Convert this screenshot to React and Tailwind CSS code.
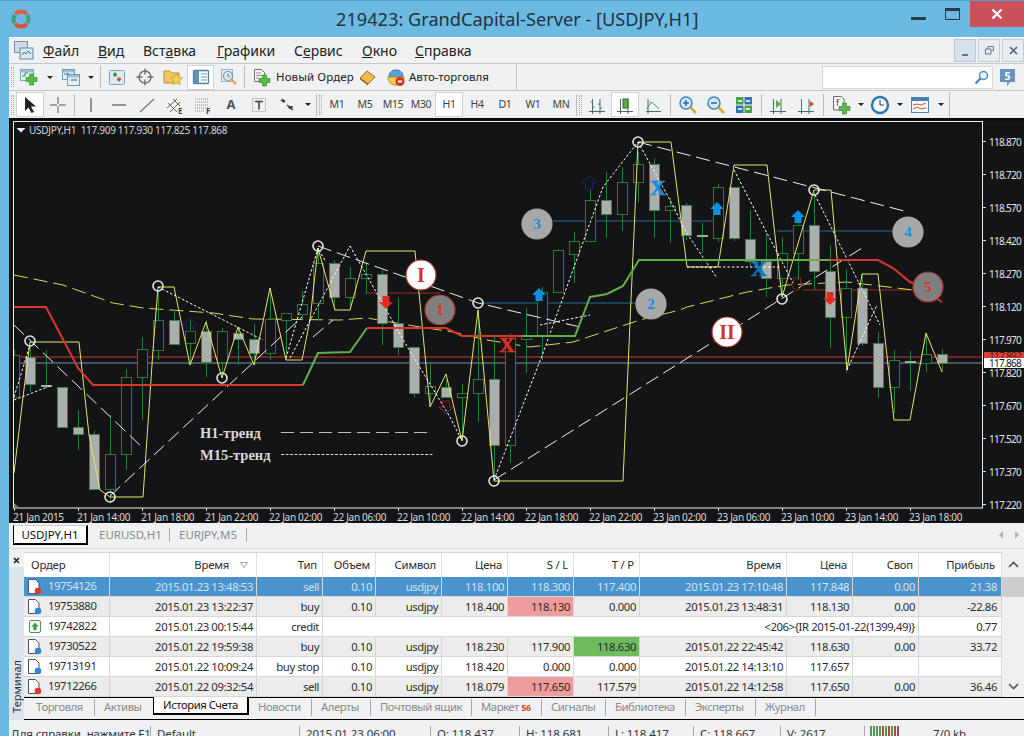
import React from 'react';

const CANDLES = [
  [355, 397, 350, 398, 'h'], [357, 384, 347, 392, 'g'], [385, 387, 350, 388, 'd'], [387, 427, 387, 427, 'g'],
  [427, 434, 410, 450, 'g'], [434, 489, 431, 489, 'g'], [454, 489, 415, 503, 'h'], [377, 454, 369, 470, 'h'],
  [349, 377, 337, 420, 'h'], [320, 350, 290, 360, 'h'], [320, 344, 310, 344, 'g'], [331, 343, 320, 365, 'h'],
  [331, 362, 320, 377, 'g'], [331, 362, 328, 377, 'h'], [333, 339, 327, 365, 'g'], [339, 353, 324, 365, 'g'],
  [319, 353, 288, 360, 'h'], [313, 320, 313, 360, 'h'], [304, 314, 291, 320, 'h'], [263, 303, 248, 320, 'h'],
  [263, 297, 260, 310, 'g'], [278, 297, 267, 310, 'h'], [274, 278, 263, 293, 'h'], [274, 323, 270, 345, 'g'],
  [323, 347, 298, 355, 'g'], [347, 393, 347, 397, 'g'], [386, 393, 362, 407, 'h'], [387, 397, 380, 397, 'g'],
  [393, 397, 384, 440, 'h'], [379, 393, 310, 422, 'h'], [379, 445, 337, 478, 'g'], [338, 445, 333, 463, 'h'],
  [336, 339, 308, 373, 'h'], [292, 336, 287, 360, 'h'], [250, 292, 249, 293, 'h'], [241, 254, 232, 283, 'h'],
  [200, 241, 190, 242, 'h'], [200, 214, 172, 238, 'g'], [182, 214, 167, 231, 'h'], [164, 182, 152, 202, 'h'],
  [164, 210, 158, 238, 'g'], [206, 210, 198, 243, 'h'], [205, 235, 203, 240, 'g'], [235, 237, 223, 253, 'd'],
  [187, 238, 184, 242, 'h'], [187, 238, 187, 241, 'g'], [239, 261, 210, 267, 'g'], [261, 278, 233, 297, 'g'],
  [253, 278, 237, 293, 'h'], [225, 253, 217, 280, 'h'], [225, 271, 192, 290, 'g'], [271, 317, 245, 348, 'g'],
  [288, 317, 269, 373, 'h'], [288, 343, 273, 346, 'g'], [343, 387, 332, 398, 'g'], [360, 387, 350, 413, 'h'],
  [361, 363, 351, 391, 'd'], [354, 363, 333, 372, 'h'], [354, 363, 349, 372, 'g'],
];

const YELLOW = '14,473 23,397 30,342 79,342 89,435 100,490 110,497 143,497 153,350 158,287 174,287 190,365 206,322 222,378 238,327 254,365 270,288 286,360 302,360 310,320 318,248 335,310 350,310 366,251 415,251 430,407 446,374 462,441 478,310 494,481 623,481 638,142 671,142 687,267 718,267 734,165 767,165 782,297 814,190 831,190 847,370 862,274 878,274 894,420 910,420 926,333 942,372';
const MA = '14,275 63,285 113,303 143,308 213,313 253,319 340,320 367,318 420,327 453,332 487,340 530,347 573,342 640,320 680,310 687,307 747,292 787,285 847,282 913,290';
const RINGS = [[30, 341], [110, 497], [158, 286], [222, 378], [318, 246], [462, 441], [478, 303], [494, 481], [638, 142], [782, 299], [814, 190]];
const H1_TREND = ['14,325 143,448', '110,496 302,317', '313,337 333,320', '318,246 478,303 580,327', '494,480 862,248', '638,142 908,212'];
const M15_TREND = [
  '14,400 50,386', '14,397 30,345', '158,287 263,340', '286,358 318,248 326,262', '290,358 350,246', '350,246 392,320 405,343 450,417 462,441',
  '494,480 543,353 603,187 638,142', '638,142 670,200 686,232 717,278', '687,267 780,267', '734,170 793,283', '815,195 880,325',
  '847,370 877,305', '540,325 590,315',
];
const PRICES = ['118.870', '118.720', '118.570', '118.420', '118.270', '118.120', '117.970', '117.820', '117.670', '117.520', '117.370', '117.220'];
const TIMES = ['21 Jan 2015', '21 Jan 14:00', '21 Jan 18:00', '21 Jan 22:00', '22 Jan 02:00', '22 Jan 06:00', '22 Jan 10:00', '22 Jan 14:00', '22 Jan 18:00', '22 Jan 22:00', '23 Jan 02:00', '23 Jan 06:00', '23 Jan 10:00', '23 Jan 14:00', '23 Jan 18:00'];

const ROWS = [
  { id: '19754126', t1: '2015.01.23 13:48:53', type: 'sell', vol: '0.10', sym: 'usdjpy', price: '118.100', sl: '118.300', tp: '117.400', t2: '2015.01.23 17:10:48', p2: '117.848', swap: '0.00', profit: '21.38', ball: '#d8392b', selected: true },
  { id: '19753880', t1: '2015.01.23 13:22:37', type: 'buy', vol: '0.10', sym: 'usdjpy', price: '118.400', sl: '118.130', tp: '0.000', t2: '2015.01.23 13:48:31', p2: '118.130', swap: '0.00', profit: '-22.86', ball: '#2f86c9', slHit: true, alt: true },
  { id: '19742822', t1: '2015.01.23 00:15:44', type: 'credit', note: '<206>{IR 2015-01-22(1399,49)}', profit: '0.77', credit: true },
  { id: '19730522', t1: '2015.01.22 19:59:38', type: 'buy', vol: '0.10', sym: 'usdjpy', price: '118.230', sl: '117.900', tp: '118.630', t2: '2015.01.22 22:45:42', p2: '118.630', swap: '0.00', profit: '33.72', ball: '#2f86c9', tpHit: true, alt: true },
  { id: '19713191', t1: '2015.01.22 10:09:24', type: 'buy stop', vol: '0.10', sym: 'usdjpy', price: '118.420', sl: '0.000', tp: '0.000', t2: '2015.01.22 14:13:10', p2: '117.657', swap: '', profit: '', ball: '#2f86c9' },
  { id: '19712266', t1: '2015.01.22 09:32:54', type: 'sell', vol: '0.10', sym: 'usdjpy', price: '118.079', sl: '117.650', tp: '117.579', t2: '2015.01.22 14:12:58', p2: '117.650', swap: '0.00', profit: '36.46', ball: '#d8392b', slHit: true, alt: true },
];

const COLS = 'grid grid-cols-[86px_147px_66px_53px_66px_66px_66px_66px_147px_66px_66px_83px]';

const I = ({ children, w = 20, h = 20 }) => (
  <svg width={w} height={h} viewBox={`0 0 ${w} ${h}`} fill="none">{children}</svg>
);

const Plus = ({ x = 9, y = 9 }) => (
  <path d={`M${x + 3.5} ${y}h4v3.500h3.500v4h-3.500v3.500h-4v-3.500h-3.500v-4h3.500z`} fill="#5cb848" stroke="#3b8a2e" strokeWidth=".7" />
);

const Win = ({ x, y, w = 12, h = 11, c = '#7ea6c6' }) => (
  <g>
    <rect x={x + 0.5} y={y + 0.5} width={w} height={h} fill="#e6f0f7" stroke={c} />
    <rect x={x + 1} y={y + 1} width={w - 1} height="2.5" fill="#9cc0da" />
  </g>
);

const Caret = ({ w = 'w-[14px]' }) => (
  <div className={`h-[26px] flex items-center justify-center ${w}`}>
    <div className="w-0 h-0 border-x-[3px] border-x-transparent border-t-[3px] border-t-[#222]" />
  </div>
);

const Sep = ({ w = 'w-[5px]' }) => (
  <div className={`${w} h-[26px] flex items-center justify-center`}>
    <div className="w-px h-[22px] bg-[#b8bcc0]" />
  </div>
);

const Grip = ({ w = 'w-[6px]' }) => (
  <div className={`${w} h-[26px] flex items-center justify-center`}>
    <div className="w-[3px] h-[20px] border-x border-dotted border-[#aaa]" />
  </div>
);

const Btn = ({ children, active, w = 'w-7' }) => (
  <div className={`${w} h-[25px] flex items-center justify-center shrink-0 ${active ? 'bg-white border border-[#cfd3d6]' : ''}`}>
    {children}
  </div>
);

const AxisIcon = ({ children }) => (
  <I>
    <path d="M2 16.500h16M5.500 4v15M13 4v15" stroke="#4f6b6b" />
    {children}
  </I>
);

const Menu = () => (
  <div className="h-[27px] shrink-0 flex items-center border-b border-[#c4c8cb] border-t border-t-white text-[14px] text-[#222]">
    <div className="w-[34px] pl-[5px]">
      <I>
        <rect x=".5" y=".5" width="13" height="11" fill="#cfdce8" stroke="#7d8ea0" />
        <rect x="6" y="7" width="13" height="11" fill="#dbe8f2" stroke="#5f87a8" />
        <path d="M8 14l2-3 2 2 2-3 3 3" stroke="#3c6f96" />
      </I>
    </div>
    <span className="w-[55px]"><u>Ф</u>айл</span>
    <span className="w-[45px]"><u>В</u>ид</span>
    <span className="w-[74px]">Вст<u>а</u>вка</span>
    <span className="w-[77px]"><u>Г</u>рафики</span>
    <span className="w-[68px]">С<u>е</u>рвис</span>
    <span className="w-[53px]"><u>О</u>кно</span>
    <span className="w-[60px]"><u>С</u>правка</span>
    <div className="ml-auto flex gap-[2px] h-[23px] items-stretch">
      <div className="w-[22px] bg-[#d5e2ec] border border-[#b7c6d2] flex items-end justify-center pb-[5px]"><div className="w-[6px] h-[2px] bg-[#6b7680]" /></div>
      <div className="w-[22px] bg-[#e8edf1] border border-[#c2cdd6] flex items-center justify-center">
        <svg width="9" height="9" viewBox="0 0 9 9" fill="none"><path d="M3 2.500V.5h5.500v4H6.500M.5 3h5.500v5H.5z" stroke="#6b7680" /></svg>
      </div>
      <div className="w-[22px] bg-[#e8edf1] border border-[#c2cdd6] flex items-center justify-center">
        <svg width="9" height="9" viewBox="0 0 9 9" fill="none"><path d="M1 1l7 7M8 1L1 8" stroke="#5c6670" strokeWidth="1.7" /></svg>
      </div>
    </div>
  </div>
);

const ToolbarOne = () => (
  <div className="h-[27px] shrink-0 flex items-center border-b border-[#c4c8cb]">
    <Grip w="w-[6px]" />
    <Btn w="w-[28px]"><I><Win x={1} y={2} w={13} h={11} /><path d="M3 9h3V6h3" stroke="#3b8a2e" /><Plus x={7} y={7} /></I></Btn>
    <Caret />
    <Btn w="w-[27px]"><I><Win x={1} y={2} w={12} h={10} c="#6f9abb" /><Win x={6} y={7} w={12} h={11} c="#6f9abb" /><path d="M3 7h5M10 13h6" stroke="#3a5f7d" /></I></Btn>
    <Caret />
    <Sep w="w-[5px]" />
    <Btn w="w-7"><I><rect x="2.500" y="3.500" width="15" height="14" rx="1" fill="#dfeaf2" stroke="#7fa5c2" /><path d="M8 5l2.500 3h-5zM6.500 8h3v1.500h-3z" fill="#2f9a3c" /><path d="M12 15l-2.500-3h5zM10.500 10.500h3V12h-3z" fill="#d8452f" /></I></Btn>
    <Btn w="w-7"><I><circle cx="10" cy="10" r="6" stroke="#6c6f72" strokeWidth="1.400" /><path d="M10 1.500v6M10 12.500v6M1.500 10h6M12.500 10h6" stroke="#6c6f72" strokeWidth="1.400" /></I></Btn>
    <Btn w="w-7"><I><path d="M1 4h6l2 2h7v10H1z" fill="#efc760" stroke="#b99136" /><path d="M13.500 6.500l1.900 3.700 4.100.6-3 2.800.8 4.100-3.800-2-3.800 2 .8-4.100-3-2.800 4.100-.6z" fill="#f6d24c" stroke="#bf9a2c" strokeWidth=".7" /></I></Btn>
    <Btn active w="w-[27px]"><I><rect x="2.500" y="3.500" width="15" height="13" rx="1" fill="#f4f8fb" stroke="#4f82a8" strokeWidth="1.300" /><rect x="3" y="4" width="5" height="12" fill="#5d93bb" /><path d="M10 7h6M10 10h6M10 13h6" stroke="#7fa0ba" /></I></Btn>
    <Btn w="w-[29px]"><I><rect x="2.500" y="2.500" width="11" height="12" fill="#e1e9f0" stroke="#9fb3c4" /><circle cx="9" cy="9" r="4.500" fill="#dce8f1" stroke="#7995ad" strokeWidth="1.200" /><path d="M9 6.500V9l2 1" stroke="#5f7f99" /><path d="M12.500 12.500L17 17" stroke="#d9a63b" strokeWidth="2.200" /></I></Btn>
    <Sep w="w-[3px]" />
    <Btn w="w-[30px]"><I><path d="M3.500 2.500h7l3 3v9h-10z" fill="#f7f7f4" stroke="#6a6f72" /><path d="M5 6h5M5 8.500h6M5 11h3" stroke="#8b8f92" /><Plus x={8} y={8} /></I></Btn>
    <span className="w-[78px] text-[11.500px] text-[#222] shrink-0 tracking-[.1px]">Новый Ордер</span>
    <Btn w="w-[28px]"><I><path d="M2 11l7-7 8 6-7 7z" fill="#efb94d" stroke="#9a6d25" /><path d="M2 11l8 6v1.500L2 12.500z" fill="#8a5f20" /></I></Btn>
    <Btn w="w-[27px]"><I><path d="M3 10c0-5 3-7 7-7s7 2 7 7z" fill="#5aa3d8" stroke="#3678a8" /><path d="M2 10h16c0 5-3 8-8 8s-8-3-8-8z" fill="#f0cb58" stroke="#b3912f" /><circle cx="14" cy="14.500" r="4.500" fill="#d8341f" /><rect x="12" y="13.500" width="4" height="2" fill="#fff" /></I></Btn>
    <span className="w-[107px] text-[11.500px] text-[#222] shrink-0">Авто-торговля</span>
    <div className="w-px h-[26px] bg-[#c4c8cb]" />
    <div className="ml-[305px] w-[171px] h-[23px] bg-white border border-[#d4d7da] flex items-center justify-end pr-[3px] shrink-0">
      <svg width="15" height="15" viewBox="0 0 15 15" fill="none"><circle cx="9.500" cy="5.500" r="4" fill="#eaf3fa" stroke="#4d8fc4" strokeWidth="1.500" /><path d="M6.500 8.500L1.500 13.500" stroke="#3c7fb6" strokeWidth="2.200" /></svg>
    </div>
    <div className="ml-[6px]">
      <svg width="17" height="20" viewBox="0 0 17 20">
        <path d="M1 2h15v13h-5l-3 4v-4H1z" fill="#6a93bb" />
        <text x="8.500" y="12.500" textAnchor="middle" fontSize="10.500" fontWeight="700" fill="#fff">5</text>
      </svg>
    </div>
  </div>
);

const Tf = ({ children, active }) => (
  <Btn active={active} w="w-7"><span className="text-[10.500px] text-[#444] tracking-[-.3px]">{children}</span></Btn>
);

const ToolbarTwo = () => (
  <div className="h-[27px] shrink-0 flex items-center">
    <Grip w="w-[7px]" />
    <Btn active w="w-[28px]"><svg width="14" height="18" viewBox="0 0 14 18"><path d="M2 1v14l3.500-3.500 3 5.500 2.500-1-3-5.500H13z" fill="#222" /></svg></Btn>
    <Btn w="w-7"><I><path d="M10 2v7M10 11v7M2 10h7M11 10h7" stroke="#555" /></I></Btn>
    <Sep />
    <Btn><I><path d="M10 3v14" stroke="#555" strokeWidth="1.200" /></I></Btn>
    <Btn><I><path d="M3 10h14" stroke="#555" strokeWidth="1.200" /></I></Btn>
    <Btn><I><path d="M3 17L17 4" stroke="#777" strokeWidth="1.200" /></I></Btn>
    <Btn><I><path d="M2 13l10-9M5 17l10-10M3 8l9 9M8 4l7 7" stroke="#666" /><text x="13" y="19" fontSize="8" fontWeight="700" fill="#444">E</text></I></Btn>
    <Btn><I><path d="M2 4h13M2 7h13M2 10h13M2 13h13M2 16h10" stroke="#888" strokeDasharray="1 1" /><text x="13" y="19" fontSize="8" fontWeight="700" fill="#444">F</text></I></Btn>
    <Btn><span className="text-[13px] font-bold text-[#555]">A</span></Btn>
    <Btn><I><rect x="3.500" y="3.500" width="13" height="13" stroke="#999" strokeDasharray="1 1" /><path d="M6 6.500h8M10 6.500v8" stroke="#444" strokeWidth="1.600" /></I></Btn>
    <Btn><I><path d="M3 5h5l-1 3zM11 11h5l-1 3-3 0z" fill="#444" /><path d="M5 4l3 3M10 10l6 5" stroke="#444" strokeWidth="1.500" /></I></Btn>
    <Caret />
    <Sep w="w-[3px]" />
    <Grip w="w-[5px]" />
    <Tf>M1</Tf><Tf>M5</Tf><Tf>M15</Tf><Tf>M30</Tf><Tf active>H1</Tf><Tf>H4</Tf><Tf>D1</Tf><Tf>W1</Tf><Tf>MN</Tf>
    <Sep w="w-[2px]" />
    <Grip w="w-[6px]" />
    <Btn><AxisIcon><path d="M3.500 7h2M5.500 12h2M11 9h2M13 13h2" stroke="#4f6b6b" /></AxisIcon></Btn>
    <Btn active><AxisIcon><rect x="8" y="4" width="5" height="9" fill="#5dac4a" stroke="#2d6d2c" /></AxisIcon></Btn>
    <Btn><I><path d="M3 16.500h15M5 4v15" stroke="#4f6b6b" /><path d="M4 14l4-7 4 3 4 4" stroke="#4e9b5a" /></I></Btn>
    <Sep w="w-[7px]" />
    <Btn><I><circle cx="8" cy="8" r="6" fill="#d7e8f5" stroke="#3d84bd" strokeWidth="1.500" /><path d="M5 8h6M8 5v6" stroke="#2d6fa5" strokeWidth="1.600" /><path d="M12.500 12.500L18 18" stroke="#d9a63b" strokeWidth="2.500" /></I></Btn>
    <Btn><I><circle cx="8" cy="8" r="6" fill="#d7e8f5" stroke="#3d84bd" strokeWidth="1.500" /><path d="M5 8h6" stroke="#2d6fa5" strokeWidth="1.600" /><path d="M12.500 12.500L18 18" stroke="#d9a63b" strokeWidth="2.500" /></I></Btn>
    <Btn><I><rect x="2" y="2" width="7.500" height="7.500" fill="#4ba04a" /><rect x="10.500" y="2" width="7.500" height="7.500" fill="#3274ae" /><rect x="2" y="10.500" width="7.500" height="7.500" fill="#3274ae" /><rect x="10.500" y="10.500" width="7.500" height="7.500" fill="#4ba04a" /><path d="M4 6h4M12 6h4M4 14h4M12 14h4" stroke="#fff" strokeWidth="1.500" /></I></Btn>
    <Sep w="w-[6px]" />
    <Btn><AxisIcon><path d="M8 5l5 4-5 4z" fill="#5dac4a" /></AxisIcon></Btn>
    <Btn><AxisIcon><path d="M18 9l-4-3v6z" fill="#d8452f" /></AxisIcon></Btn>
    <Sep w="w-[7px]" />
    <Btn><I><path d="M2.500 1.500h8l2.500 2.500v11h-10.500z" fill="#fafafa" stroke="#6a6f72" /><text x="5" y="11" fontSize="9" fill="#444">f</text><Plus x={8} y={8} /></I></Btn>
    <Caret w="w-[11px]" />
    <Btn w="w-[28px]"><I><circle cx="10" cy="10" r="8" fill="#fff" stroke="#2a78b8" strokeWidth="2.400" /><path d="M10 5v5h4" stroke="#333" /></I></Btn>
    <Caret w="w-[12px]" />
    <Btn w="w-[28px]"><I><rect x="1.500" y="2.500" width="17" height="15" fill="#f7f9fb" stroke="#4d84ad" /><rect x="2" y="3" width="16" height="3" fill="#3f81b6" /><path d="M3 10l4-1 4 1 5-2M3 14l4-2 4 2 5-1" stroke="#d2533f" /></I></Btn>
    <Caret />
    <div className="ml-[1px] w-px h-[26px] bg-[#b8bcc0]" />
  </div>
);

const Candle = ({ c, i }) => {
  const x = 14.5 + 16 * i;
  const [top, bot, wt, wb, kind] = c;
  return (
    <g>
      <path d={`M${x} ${wt}V${wb}`} stroke="#2c7a39" />
      {kind === 'd' ? (
        <rect x={x - 5.5} y={top} width="11" height={bot - top} fill="#8fb594" />
      ) : (
        <rect x={x - 5} y={top + 0.5} width="10" height={bot - top} fill={kind === 'g' ? '#adadad' : '#131416'} stroke={kind === 'g' ? '#3f7d4c' : '#2c7a39'} />
      )}
    </g>
  );
};

const Marker = ({ x, y, fill, stroke, color, label, size = 15 }) => (
  <g>
    <circle cx={x} cy={y} r="15" fill={fill} stroke={stroke} strokeWidth="1.200" />
    <text x={x} y={y + size * 0.35} textAnchor="middle" fontSize={size} fontWeight="700" fill={color} className="font-['Liberation_Serif',serif]">{label}</text>
  </g>
);

const Up = ({ x, y, fill, stroke = 'none', w = 1 }) => (
  <path d={`M${x} ${y - 7}l7 7h-3.500v6h-7v-6h-3.500z`} fill={fill} stroke={stroke} strokeWidth={w} />
);

const Down = ({ x, y, fill, stroke = 'none', w = 1 }) => (
  <path d={`M${x} ${y + 7}l7 -7h-3.500v-6h-7v6h-3.500z`} fill={fill} stroke={stroke} strokeWidth={w} />
);

const Chart = () => (
  <svg width="1015" height="407" viewBox="9 118 1015 407" className="block shrink-0 bg-[#131416] font-['Noto_Sans',sans-serif]">
    <defs>
      <clipPath id="plot"><rect x="14" y="122" width="968" height="386" /></clipPath>
    </defs>
    <rect x="9" y="118" width="1015" height="2.500" fill="#0a0a0a" />
    <rect x="13.500" y="121.500" width="969" height="386.500" fill="none" stroke="#ececec" />
    <path d="M14 503l6 5h-6z" fill="#777" />
    <g clipPath="url(#plot)">
      <path d="M14 357H983" stroke="#c9352b" />
      <path d="M14 363H983" stroke="#7f8ea3" />
      <path d="M365 293H440M803 290H913" stroke="#a12a25" />
      <path d="M480 303H637M553 221H720M777 231H893" stroke="#1f6a94" />
      <polyline points={MA} fill="none" stroke="#d8d84f" strokeDasharray="14 6" />
      {CANDLES.map((c, i) => <Candle key={i} c={c} i={i} />)}
      <polyline points={YELLOW} fill="none" stroke="#e4e46a" />
      {H1_TREND.map((p) => <polyline key={p} points={p} fill="none" stroke="#eee" strokeDasharray="14 6" />)}
      {M15_TREND.map((p) => <polyline key={p} points={p} fill="none" stroke="#fff" strokeDasharray="2.500 2" />)}
      <polyline points="14,307 46,307 78,368 93,385 303,385" fill="none" stroke="#d9362c" strokeWidth="2" />
      <polyline points="303,385 318,353 350,352 367,328" fill="none" stroke="#5fb04a" strokeWidth="2" />
      <polyline points="367,328 446,328 462,336 522,336" fill="none" stroke="#d9362c" strokeWidth="2" />
      <polyline points="522,336 575,336 590,297 607,294 623,286 639,260 830,260" fill="none" stroke="#5fb04a" strokeWidth="2" />
      <polyline points="830,260 878,260 893,268 910,282 913,283 942,302" fill="none" stroke="#d9362c" strokeWidth="2" />
      {RINGS.map(([x, y]) => <circle key={`${x}-${y}`} cx={x} cy={y} r="5" fill="none" stroke="#e6e6e6" strokeWidth="1.600" />)}

      <Up x={539} y={295} fill="#0f8fe0" />
      <Up x={717} y={209} fill="#0f8fe0" />
      <Up x={798} y={217} fill="#0f8fe0" />
      <Down x={386} y={302} fill="#e62a1f" />
      <Down x={830} y={298} fill="#e62a1f" />
      <Up x={190} y={325} fill="none" stroke="#22226e" />
      <Up x={589} y={183} fill="none" stroke="#22226e" />
      <Down x={446} y={407} fill="none" stroke="#8c2525" />
      <Down x={797} y={284} fill="none" stroke="#8c2525" />

      <Marker x={440} y={310} fill="#7f7f7f" stroke="#a8322c" color="#d5322a" label="1" />
      <Marker x={651} y={304} fill="#a8a8a8" stroke="#a8a8a8" color="#1090e0" label="2" />
      <Marker x={537} y={224} fill="#a8a8a8" stroke="#a8a8a8" color="#1090e0" label="3" />
      <Marker x={908} y={232} fill="#a8a8a8" stroke="#a8a8a8" color="#1090e0" label="4" />
      <Marker x={928} y={287} fill="#7f7f7f" stroke="#b5332c" color="#d5322a" label="5" />
      <Marker x={421} y={275} fill="#fff" stroke="#b5332c" color="#d5322a" label="I" size={20} />
      <Marker x={727} y={332} fill="#fff" stroke="#b5332c" color="#d5322a" label="II" size={20} />

      <g className="font-['Liberation_Serif',serif]" fontWeight="700" textAnchor="middle" fontSize="22" strokeWidth=".6">
        <text x={507} y={352} fill="#e02b22" stroke="#e02b22">X</text>
        <text x={658} y={195} fill="#0f8fe0" stroke="#0f8fe0">X</text>
        <text x={759} y={276} fill="#0f78c0" stroke="#0f78c0">X</text>
      </g>

      <path d="M281 432.500H433" stroke="#bdbdbd" strokeDasharray="13 6" />
      <path d="M281 454.500H433" stroke="#d8d8d8" strokeDasharray="3 1.500" />
      <g className="font-['Liberation_Serif',serif]" fontSize="14.500" fontWeight="700" fill="#d8d8d8">
        <text x="200" y="438">H1-тренд</text>
        <text x="200" y="460">M15-тренд</text>
      </g>
    </g>

    <path d="M21 132.500l-4.500-4.500h9z" fill="#eee" />
    <text x="29" y="133.500" fontSize="10" letterSpacing="-.3" fill="#d4d4d4" xmlSpace="preserve">USDJPY,H1  117.909 117.930 117.825 117.868</text>

    {PRICES.map((p, i) => (
      <g key={p}>
        <path d={`M983 ${141.500 + 33 * i}h3`} stroke="#ddd" />
        <text x="989" y={145.500 + 33 * i} fontSize="10" letterSpacing="-.7" fill="#e4e4e4">{p}</text>
      </g>
    ))}
    {TIMES.map((t, i) => (
      <g key={t}>
        <path d={`M${14.500 + 64 * i} 508v3`} stroke="#ddd" />
        <text x={13 + 64 * i} y="521" fontSize="10" letterSpacing="-.3" fill="#dcdcdc">{t}</text>
      </g>
    ))}
    <rect x="984" y="352" width="40" height="8" fill="#d4423a" />
    <text x="989" y="360" fontSize="10" letterSpacing="-.7" fill="#5e1a16">117.892</text>
    <rect x="984" y="358" width="40" height="10" fill="#fff" />
    <text x="989" y="367" fontSize="10" letterSpacing="-.7" fill="#111">117.868</text>
    <rect x="9" y="523" width="1015" height="2" fill="#eeeeee" />
  </svg>
);

const ChartTabs = () => (
  <div className="h-[24px] shrink-0 flex text-[11.500px] text-[#8a8a8a] pl-[4px] border-b border-[#dcdcdc]">
    <div className="w-[75px] h-[20px] bg-white border border-black border-t-[#ccc] border-r-2 border-b-2 text-[#111] flex items-center justify-center">USDJPY,H1</div>
    <div className="h-[20px] flex items-center pl-[11px] w-[81px]">EURUSD,H1</div>
    <div className="h-[14px] mt-[3px] w-px bg-[#aaa]" />
    <div className="h-[20px] flex items-center pl-[9px] w-[76px]">EURJPY,M5</div>
    <div className="h-[14px] mt-[3px] w-px bg-[#aaa]" />
    <div className="ml-auto h-[20px] flex items-center gap-[12px] pr-[5px] text-[#a8a8a8]">
      <div className="w-0 h-0 border-y-[4px] border-y-transparent border-r-[4px] border-r-[#b4b4b4]" />
      <div className="w-0 h-0 border-y-[4px] border-y-transparent border-l-[4px] border-l-[#b4b4b4]" />
    </div>
  </div>
);

const DocIcon = ({ ball }) => (
  <svg width="14" height="16" viewBox="0 0 14 16" fill="none">
    <path d="M.5 .5h7l3.500 3.500v10.500h-10.500z" fill="#fff" stroke="#4a5660" />
    <circle cx="10" cy="12" r="3.300" fill={ball} />
  </svg>
);

const CreditIcon = () => (
  <svg width="12" height="13" viewBox="0 0 12 13" fill="none">
    <rect x=".5" y=".5" width="11" height="12" rx="1.500" fill="#f3f8f1" stroke="#5c8f58" />
    <path d="M6 2.500l3.500 4H7.500v3.500h-3V6.500H2.500z" fill="#3a9a44" />
  </svg>
);

const Cell = ({ children, className = '' }) => (
  <div className={`h-full leading-[19px] text-right pr-[3px] border-r border-[#d7d7d7] whitespace-nowrap ${className}`}>{children}</div>
);

const Row = ({ r }) => {
  const bg = r.selected ? 'bg-[#4a93cd] text-[#d4e4f0]' : r.alt ? 'bg-[#ececec] text-[#2c2c2c]' : 'bg-white text-[#2c2c2c]';
  return (
    <div className={`${COLS} h-5 border-b border-[#d7d7d7] tracking-[-.4px] ${bg}`}>
      <div className="h-full flex items-center gap-[6px] pl-[4px] border-r border-[#d7d7d7]">
        <div className="w-[14px] flex justify-center shrink-0">{r.credit ? <CreditIcon /> : <DocIcon ball={r.ball} />}</div>
        <span>{r.id}</span>
      </div>
      <Cell>{r.t1}</Cell>
      <Cell>{r.type}</Cell>
      {r.note ? (
        <Cell className="col-span-8">{r.note}</Cell>
      ) : (
        <>
          <Cell>{r.vol}</Cell>
          <Cell>{r.sym}</Cell>
          <Cell>{r.price}</Cell>
          <Cell className={r.slHit ? 'bg-[#ee9c9c]' : ''}>{r.sl}</Cell>
          <Cell className={r.tpHit ? 'bg-[#6dbb5c]' : ''}>{r.tp}</Cell>
          <Cell>{r.t2}</Cell>
          <Cell>{r.p2}</Cell>
          <Cell>{r.swap}</Cell>
        </>
      )}
      <Cell className="pr-[4px]">{r.profit}</Cell>
    </div>
  );
};

const Head = ({ children, className = '' }) => (
  <div className={`h-full flex items-center justify-end pr-[5px] border-r border-[#e0e0e0] ${className}`}>{children}</div>
);

const Table = () => (
  <div className="flex h-[145px] text-[11.300px]">
    <div className="w-[978px] flex flex-col">
      <div className={`${COLS} h-[25px] bg-white border-t border-[#d4d4d4] text-[#2c2c2c] tracking-[-.2px]`}>
        <Head className="justify-start pl-[7px]">Ордер</Head>
        <Head className="pr-[8px] gap-[11px]">Время<svg width="8" height="6" viewBox="0 0 8 6" fill="none"><path d="M.5 .5h7L4 5.500z" stroke="#9aa5ad" /></svg></Head>
        <Head>Тип</Head>
        <Head>Объем</Head>
        <Head>Символ</Head>
        <Head>Цена</Head>
        <Head>S / L</Head>
        <Head>T / P</Head>
        <Head>Время</Head>
        <Head>Цена</Head>
        <Head>Своп</Head>
        <Head className="pr-[6px]">Прибыль</Head>
      </div>
      {ROWS.map((r) => <Row key={r.id} r={r} />)}
    </div>
    <div className="w-[22px] flex flex-col bg-[#f0f0f0]">
      <div className="h-[25px] flex items-center justify-center">
        <svg width="11" height="7" viewBox="0 0 11 7" fill="none"><path d="M1 6l4.500-4.500L10 6" stroke="#555" strokeWidth="1.600" /></svg>
      </div>
      <div className="h-5 bg-[#cdcdcd]" />
      <div className="mt-auto h-[22px] flex items-center justify-center">
        <svg width="11" height="7" viewBox="0 0 11 7" fill="none"><path d="M1 1l4.500 4.500L10 1" stroke="#555" strokeWidth="1.600" /></svg>
      </div>
    </div>
  </div>
);

const Tab = ({ children, w, sep = true, pl = 'pl-[9px]' }) => (
  <div className={`${w} ${pl} h-[17px] mt-px flex items-center whitespace-nowrap ${sep ? 'border-r border-[#a8a8a8]' : ''}`}>{children}</div>
);

const BottomTabs = () => (
  <div className="h-[23px] flex border-t border-black text-[11.300px] tracking-[-.45px] text-[#8a8a8a] border-b border-[#d0d0d0]">
    <Tab w="w-[71px]" pl="pl-[12px]">Торговля</Tab>
    <Tab w="w-[58px]" sep={false}>Активы</Tab>
    <div className="w-[96px] h-[18px] bg-white border-x border-b-2 border-black border-r-2 text-[#111] flex items-center justify-center -mt-px">История Счета</div>
    <Tab w="w-[63px]">Новости</Tab>
    <Tab w="w-[59px]">Алерты</Tab>
    <Tab w="w-[101px]">Почтовый ящик</Tab>
    <Tab w="w-[70px]"><span>Маркет <b className="text-[9px] text-[#d84a3a]">56</b></span></Tab>
    <Tab w="w-[64px]">Сигналы</Tab>
    <Tab w="w-[80px]">Библиотека</Tab>
    <Tab w="w-[70px]">Эксперты</Tab>
    <Tab w="w-[60px]">Журнал</Tab>
  </div>
);

const Terminal = () => (
  <div className="h-[171px] shrink-0 flex">
    <div className="w-[15px] flex flex-col">
      <div className="h-[17px] flex items-center justify-center pt-[6px]">
        <svg width="7" height="7" viewBox="0 0 7 7" fill="none"><path d="M1 1l5 5M6 1L1 6" stroke="#222" strokeWidth="1.600" /></svg>
      </div>
      <div className="flex-1 mt-[1px] bg-[#dde6ee] flex items-end justify-center pb-[7px]">
        <span className="[writing-mode:vertical-rl] rotate-180 text-[11px] leading-[12px] text-[#333]">Терминал</span>
      </div>
    </div>
    <div className="flex-1 pt-[3px]">
      <Table />
      <BottomTabs />
    </div>
  </div>
);

const Status = ({ w, children, pl = 'pl-[6px]' }) => (
  <div className={`${w} ${pl} h-full border-r border-[#a8a8a8] whitespace-nowrap shrink-0`}>{children}</div>
);

const StatusBar = () => (
  <div className="h-[14px] mt-[2px] shrink-0 overflow-hidden flex text-[11.500px] leading-[16px] text-[#333] pt-[4px] tracking-[-.1px]">
    <Status w="w-[142px]" pl="pl-[2px]">Для справки, нажмите F1</Status>
    <Status w="w-[149px]">Default</Status>
    <Status w="w-[131px]">2015.01.23 06:00</Status>
    <Status w="w-[89px]">O: 118.437</Status>
    <Status w="w-[89px]">H: 118.681</Status>
    <Status w="w-[85px]">L: 118.417</Status>
    <Status w="w-[87px]">C: 118.667</Status>
    <Status w="w-[84px]">V: 2617</Status>
    <div className="pl-[5px] w-[68px] flex items-start gap-px">
      {['bg-[#4d9c50]', 'bg-[#4d9c50]', 'bg-[#4d9c50]', 'bg-[#4d9c50]', 'bg-[#b04a40]', 'bg-[#4d9c50]', 'bg-[#b04a40]', 'bg-[#4d9c50]', 'bg-[#b04a40]', 'bg-[#b04a40]'].map((c, i) => (
        <div key={i} className={`w-[2px] h-[14px] ${c}`} />
      ))}
    </div>
    <span>7/0 kb</span>
  </div>
);

export default function App() {
  return (
    <div className="w-[1024px] h-[736px] overflow-hidden flex flex-col bg-[#6cb9e1] font-['Noto_Sans',sans-serif]">
      <div className="h-[37px] shrink-0 flex border-t border-[#4f9fcc]">
        <div className="w-[336px] pl-[10px] pt-[7px]">
          <svg width="22" height="22" viewBox="0 0 22 22" fill="none" strokeWidth="4">
            <path d="M5 6a8.500 8.500 0 0 1 12 0" stroke="#e2603f" />
            <path d="M17.500 7a8.500 8.500 0 0 1 0 8" stroke="#3aa37c" />
            <path d="M17 16a8.500 8.500 0 0 1-12 0" stroke="#d9503f" />
            <path d="M4.500 15a8.500 8.500 0 0 1 0-8" stroke="#3aa37c" />
          </svg>
        </div>
        <div className="text-[18.200px] leading-[36px] text-[#22333f] whitespace-nowrap">219423: GrandCapital-Server - [USDJPY,H1]</div>
        <div className="ml-auto flex items-start">
          <div className="w-[15px] h-[19px] border-b-[3px] border-[#2a3a46] mr-[19px]" />
          <div className="w-[15px] h-[12px] mt-[7px] border border-t-[3px] border-[#2a3a46] mr-[10px]" />
          <div className="w-[54px] h-[26px] bg-[#c9525a] flex items-center justify-center">
            <svg width="12" height="12" viewBox="0 0 12 12" fill="none"><path d="M1.500 1.500l9 9M10.500 1.500l-9 9" stroke="#fff" strokeWidth="2.200" /></svg>
          </div>
        </div>
      </div>
      <div className="flex-1 min-h-0 ml-[9px] flex flex-col bg-[#f0f1f3]">
        <Menu />
        <ToolbarOne />
        <ToolbarTwo />
        <Chart />
        <ChartTabs />
        <Terminal />
        <StatusBar />
      </div>
    </div>
  );
}
